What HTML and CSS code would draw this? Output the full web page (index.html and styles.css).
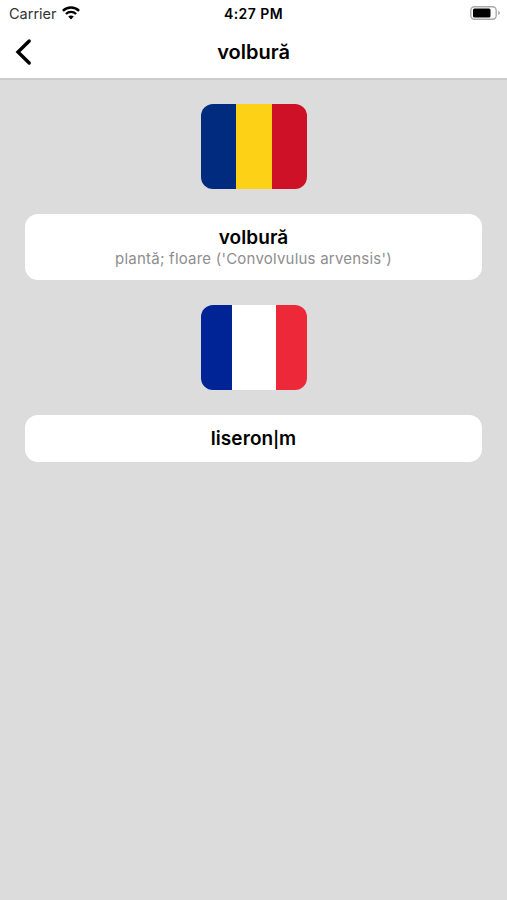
FILE: index.html
```html
<!DOCTYPE html>
<html lang="ro">
<head>
<meta charset="utf-8">
<title>volbură</title>
<link rel="stylesheet" href="styles.css">
</head>
<body>
<header class="header">
  <div class="status">
    <div class="status-left">
      <span class="carrier">Carrier</span>
      <svg class="wifi" width="18" height="14" viewBox="0 0 18 14" fill="none" stroke="#000">
        <path d="M.9 4.9C5.4 .5 12.6 .5 17.1 4.9" stroke-width="2.5"/>
        <path d="M3.9 8C6.8 5.2 11.2 5.2 14.1 8" stroke-width="2.3"/>
        <path d="M6.2 10.6C7.8 9 10.2 9 11.8 10.6L9 13.5Z" fill="#000" stroke="none"/>
      </svg>
    </div>
    <span class="time">4:27 PM</span>
    <svg class="battery" width="31" height="14" viewBox="0 0 31 14">
      <rect x=".8" y=".8" width="25.4" height="12.4" rx="3.6" fill="#fff" stroke="#aaa" stroke-width="1.4"/>
      <rect x="3" y="2.6" width="17.5" height="8.8" rx="1.5" fill="#000"/>
      <path d="M28.2 4.8C30.5 5.8 30.5 8.2 28.2 9.2Z" fill="#aaa"/>
    </svg>
  </div>
  <nav class="nav">
    <svg class="back" width="18" height="28" viewBox="0 0 18 28" fill="none" stroke="#000" stroke-width="3.4" stroke-linecap="round">
      <path d="M14.2 3L3 14L14.2 25" stroke-linejoin="miter"/>
    </svg>
    <h1 class="title">volbură</h1>
  </nav>
</header>
<main class="content">
  <div class="flag flag-ro"></div>
  <section class="card card-tall">
    <h2 class="word">volbură</h2>
    <p class="note">plantă; floare ('Convolvulus arvensis')</p>
  </section>
  <div class="flag flag-fr"></div>
  <section class="card card-short">
    <h2 class="word">liseron<span class="bar">|</span>m</h2>
  </section>
</main>
</body>
</html>
```

FILE: styles.css
```css
* { box-sizing: border-box; }
body {
  margin: 0;
  min-height: 900px;
  display: flex;
  flex-direction: column;
  background: #dcdcdc;
  color: #000;
  font-family: Inter, "Liberation Sans", sans-serif;
}
h1, h2, p { margin: 0; }
.header {
  height: 80px;
  background: #fff;
  border-bottom: 2px solid #cbcbcb;
}
.status {
  height: 27px;
  display: grid;
  grid-template-columns: 1fr auto 1fr;
  align-items: center;
  padding: 0 6px 0 9px;
}
.status-left { display: flex; align-items: center; gap: 5px; }
.carrier { font-size: 14.5px; color: #333; line-height: 27px; }
.wifi { margin-top: -1px; }
.time { font-size: 14px; font-weight: 600; line-height: 27px; letter-spacing: .45px; margin-right: 3px; }
.battery { justify-self: end; margin-top: -1px; }
.nav {
  height: 49px;
  display: grid;
  grid-template-columns: 1fr auto 1fr;
  align-items: center;
  padding: 0 15px;
}
.title { font-size: 20px; font-weight: 600; line-height: 28px; }
.content {
  flex: 1;
  display: flex;
  flex-direction: column;
  align-items: center;
  padding: 23.5px 25px 0;
  gap: 24.5px;
}
.flag {
  width: 106px;
  height: 85.5px;
  border-radius: 12px;
}
.flag-ro { background: linear-gradient(to right, #002b7f 33.3%, #fcd116 33.3% 66.6%, #ce1126 66.6%); }
.flag-fr { background: linear-gradient(to right, #002395 29.7%, #fff 29.7% 70.4%, #ed2939 70.4%); }
.card {
  width: 100%;
  display: flex;
  flex-direction: column;
  align-items: center;
  justify-content: center;
  background: #fff;
  border-radius: 13px;
}
.card-tall { height: 66.5px; padding-top: 2px; }
.card-short { height: 47.5px; padding-top: 1px; }
.word { font-size: 19px; font-weight: 600; line-height: 23px; letter-spacing: .08px; }
.bar { font-size: 16px; line-height: 1; }
.note { font-size: 15px; line-height: 20px; color: #8e8e8e; letter-spacing: .22px; }
```
